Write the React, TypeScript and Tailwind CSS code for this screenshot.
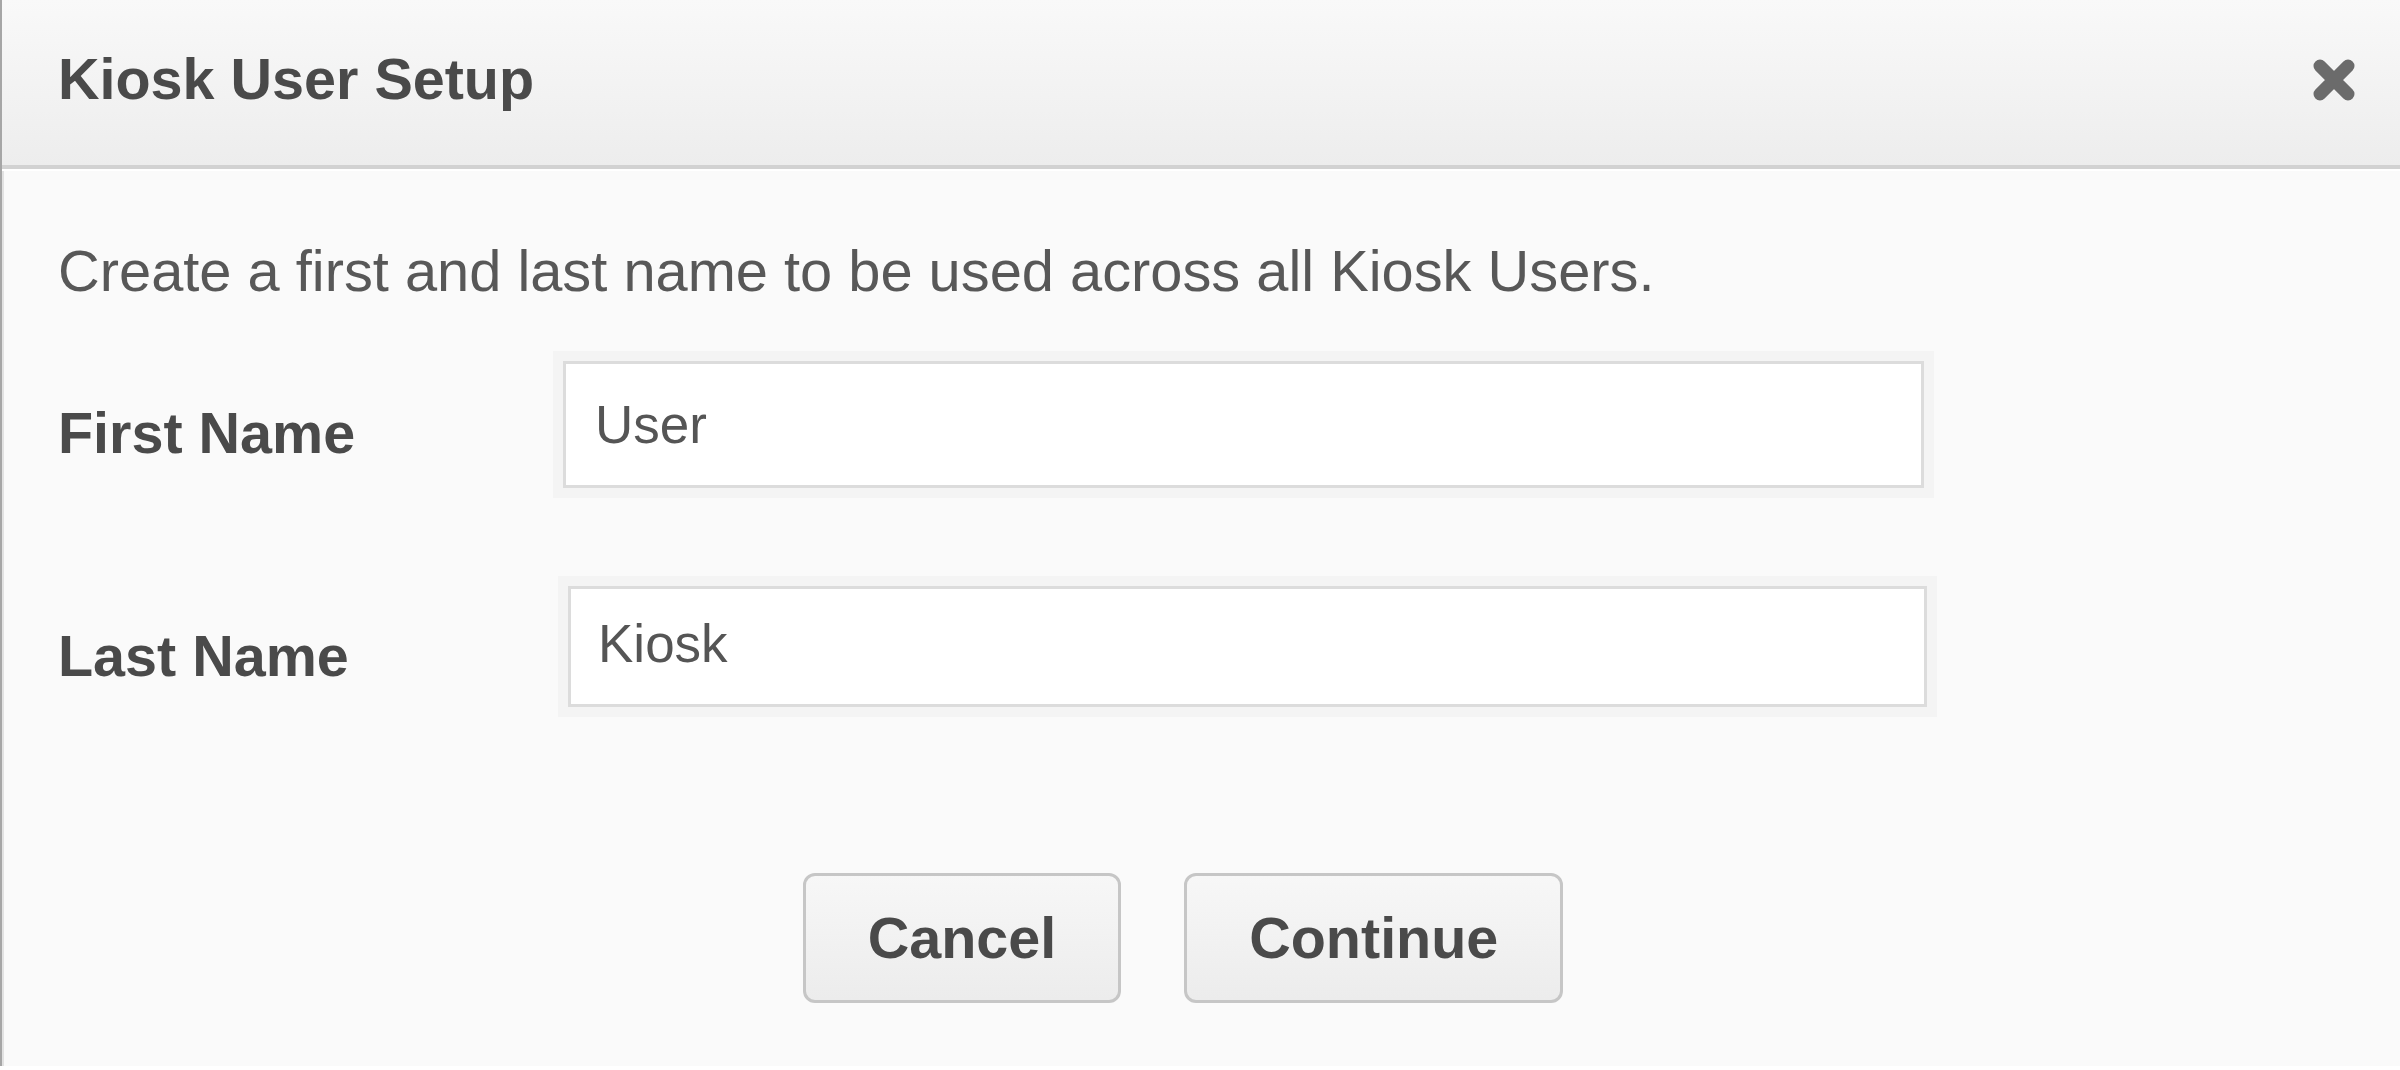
import React from 'react';

const CloseIcon = () => (
  <svg width="46" height="46" viewBox="0 0 46 46" className="block">
    <path d="M9 9L37 37M37 9L9 37" stroke="#6b6b6b" strokeWidth="13" strokeLinecap="round" />
  </svg>
);

const KioskUserSetup: React.FC = () => {
  return (
    <div className="w-[2400px] h-[1070px] bg-white font-['Liberation_Sans',Arial,sans-serif]">
      <div className="h-[1066px] flex flex-col bg-[#fafafa] border-l-2 border-[#a6a6a6] shadow-[inset_2px_0_0_#e2e2e2]">
        {/* header */}
        <div className="h-[169px] shrink-0 flex items-center justify-between pl-[56px] pr-[43px] pb-[6px] bg-gradient-to-b from-[#f9f9f9] to-[#ededed] border-b-4 border-[#d2d2d2] shadow-[0_2px_0_#ffffff]">
          <h1 className="text-[57.5px] leading-none font-bold text-[#4a4a4a]">Kiosk User Setup</h1>
          <CloseIcon />
        </div>

        {/* body */}
        <div className="flex flex-col pl-[56px]">
          <p className="mt-[69px] text-[57.8px] leading-[66px] text-[#585858]">
            Create a first and last name to be used across all Kiosk Users.
          </p>

          <div className="mt-[57px] flex items-center">
            <label className="w-[505px] pt-[16px] text-[57.5px] leading-[66px] font-bold text-[#4a4a4a]">First Name</label>
            <div className="w-[1361px] h-[127px] flex items-center pl-[29px] bg-white border-[3px] border-[#dcdcdc] shadow-[0_0_0_10px_#f4f4f4] text-[53px] text-[#555555]">
              User
            </div>
          </div>

          <div className="mt-[98px] flex items-center">
            <label className="w-[510px] pt-[18px] text-[57.5px] leading-[66px] font-bold text-[#4a4a4a]">Last Name</label>
            <div className="w-[1359px] h-[121px] flex items-center pl-[27px] pb-[6px] bg-white border-[3px] border-[#dcdcdc] shadow-[0_0_0_10px_#f4f4f4] text-[53px] text-[#555555]">
              Kiosk
            </div>
          </div>

          <div className="mt-[166px] flex justify-center gap-[63px] pr-[92px]">
            <button className="h-[130px] px-[62px] rounded-[12px] border-[3px] border-[#c6c6c6] bg-gradient-to-b from-[#f7f7f7] to-[#ececec] text-[57.5px] font-bold text-[#4a4a4a]">
              Cancel
            </button>
            <button className="h-[130px] px-[62px] rounded-[12px] border-[3px] border-[#c6c6c6] bg-gradient-to-b from-[#f7f7f7] to-[#ececec] text-[57.5px] font-bold text-[#4a4a4a]">
              Continue
            </button>
          </div>
        </div>
      </div>
    </div>
  );
};

export default KioskUserSetup;
